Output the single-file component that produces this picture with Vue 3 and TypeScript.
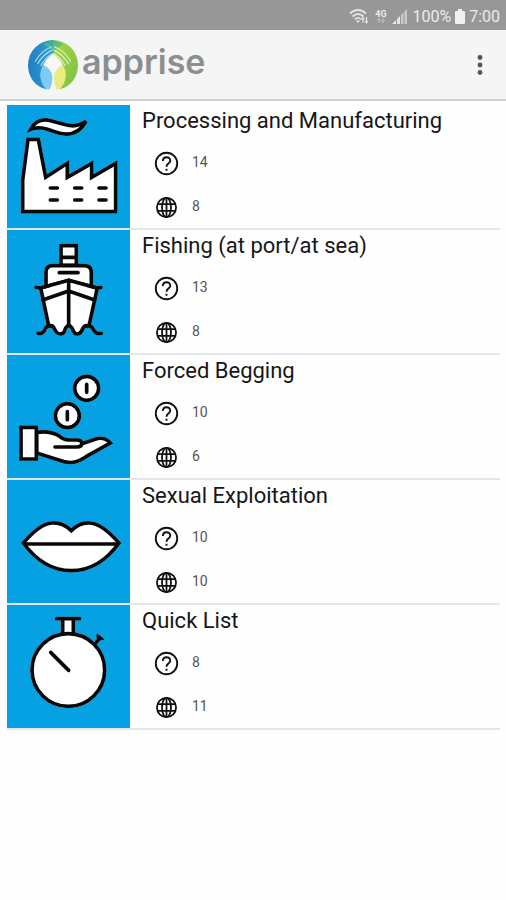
<script setup lang="ts">
type Art = 'factory' | 'ship' | 'hand' | 'lips' | 'watch'

interface Category {
  title: string
  art: Art
  viewBox: string
  questions: number
  languages: number
}

const categories: Category[] = [
  { title: 'Processing and Manufacturing', art: 'factory', viewBox: '21 15 369 369', questions: 14, languages: 8 },
  { title: 'Fishing (at port/at sea)', art: 'ship', viewBox: '21 6 369 369', questions: 13, languages: 8 },
  { title: 'Forced Begging', art: 'hand', viewBox: '21 9 369 369', questions: 10, languages: 6 },
  { title: 'Sexual Exploitation', art: 'lips', viewBox: '21 7 369 369', questions: 10, languages: 10 },
  { title: 'Quick List', art: 'watch', viewBox: '21 15 369 369', questions: 8, languages: 11 },
]
</script>

<template>
  <div class="screen">
    <div class="status">
      <svg class="wifi" viewBox="0 0 20 16" aria-hidden="true">
        <g fill="none" stroke="#e6e6e6" stroke-width="1.8">
          <path d="M1 5.500Q9 -1.500 17 5.500" />
          <path d="M3.500 8.500Q9 3.500 14.500 8.500" />
          <path d="M6 11.300Q9 8.500 12 11.300" />
        </g>
        <path d="M7 12.500h4l-2 2.500z" fill="#e6e6e6" />
        <path d="M14 15v-5M12.500 11.500L14 9.500l1.500 2M17.500 9v5.500M16 13l1.500 2 1.500-2" fill="none" stroke="#e6e6e6" stroke-width="1.100" />
      </svg>
      <span class="net">
        <span>4G</span>
        <svg viewBox="0 0 10 5" aria-hidden="true"><path d="M3 5V1M1.500 2.500L3 .5l1.500 2M7 0v4M5.500 2.500L7 4.500l1.500-2" fill="none" stroke="#c4c4c4" /></svg>
      </span>
      <svg class="signal" viewBox="0 0 16 15" aria-hidden="true">
        <path d="M0 15L4 11v4zM5 10l3-3v8H5z" fill="#e6e6e6" />
        <path d="M9 6l2.500-2.500V15H9zM12.500 2.500L15 0v15h-2.500z" fill="#c9c9c9" />
      </svg>
      <span>100%</span>
      <svg class="battery" viewBox="0 0 10 15" aria-hidden="true">
        <path d="M3 0h4v2h2q1 0 1 1v11q0 1-1 1H1q-1 0-1-1V3q0-1 1-1h2z" fill="#f1f1f1" />
      </svg>
      <span>7:00</span>
    </div>

    <header class="bar">
      <div class="brand">
        <svg class="logo" viewBox="8 10 148 148" aria-hidden="true">
          <defs>
            <linearGradient id="blue" x1="0" y1="0" x2="1" y2="0">
              <stop offset="0" stop-color="#1f7fc2" />
              <stop offset="1" stop-color="#2f9fce" />
            </linearGradient>
            <linearGradient id="green" x1="0" y1="0" x2="1" y2="1">
              <stop offset="0" stop-color="#a9d548" />
              <stop offset="1" stop-color="#7ac143" />
            </linearGradient>
          </defs>
          <path d="M82 10A74 74 0 0 0 8 84C8 118 28 148 62 156Q48 128 50 92Q58 66 82 50z" fill="url(#blue)" />
          <path d="M82 10A74 74 0 0 1 156 84C156 118 136 148 102 156Q116 128 114 92Q106 66 82 50z" fill="url(#green)" />
          <path d="M82 10Q62 14 52 24Q72 30 82 52Q92 30 112 24Q100 14 82 10z" fill="#45b08f" opacity=".75" />
          <path d="M55 84Q44 94 44 116Q47 142 62 156L72 156Q82 134 80 114Q74 94 55 84z" fill="#80cbf3" />
          <path d="M109 84Q120 94 120 116Q117 142 102 156L93 156Q83 134 85 114Q91 94 109 84z" fill="#e8ec82" />
          <g fill="none" stroke-width="3.500" stroke-linecap="round">
            <g stroke="#a8dbea">
              <path d="M78 30Q46 43 30 73" />
              <path d="M79 40Q52 53 37 80" />
              <path d="M80 50Q58 63 46 86" />
            </g>
            <g stroke="#dff0b4">
              <path d="M86 30Q118 43 134 73" />
              <path d="M85 40Q112 53 127 80" />
              <path d="M84 50Q106 63 118 86" />
            </g>
          </g>
          <path d="M62 23Q76 28 82 38Q88 28 102 23" fill="none" stroke="#b9e4d6" stroke-width="2" opacity=".5" />
          <path d="M82 56Q68 68 60 84Q76 94 80 114L82.500 124L85 114Q88 94 104 84Q96 68 82 56z" fill="#f8f8f8" />
        </svg>
        <span class="name">apprise</span>
      </div>
      <button class="more" type="button" aria-label="More options">
        <svg viewBox="0 0 6 22" aria-hidden="true">
          <circle cx="3" cy="3.500" r="2.400" /><circle cx="3" cy="11" r="2.400" /><circle cx="3" cy="18.500" r="2.400" />
        </svg>
      </button>
    </header>

    <main>
      <ul class="list">
        <li v-for="item in categories" :key="item.title" class="row">
          <svg class="tile" :viewBox="item.viewBox" aria-hidden="true">
            <g class="art">
              <template v-if="item.art === 'factory'">
                <path d="M68 335V240L84 118H115L137 232L202 190V232L275 190V232L347 190V335z" />
                <path d="M92 88C106 62 128 56 152 62C190 72 222 90 258 64C240 96 216 108 180 100C146 90 122 76 92 88z" />
                <path d="M151 264h21M224 264h21M297 264h21M151 300h21M224 300h21M297 300h21" />
              </template>
              <template v-else-if="item.art === 'ship'">
                <path d="M183 53H229V112H183zM183 88H229" />
                <path d="M138 176V132Q138 113 158 113H252Q274 113 274 132V176z" />
                <path d="M122 180L146 294Q158 290 163 302Q170 318 181 318Q193 318 196 302Q206 284 217 302Q222 318 231 318Q243 318 248 302Q254 290 267 294L292 180L206 157z" />
                <path d="M108 178L122 180L206 157L292 180L303 178M128 216L206 189L284 216M206 157V292" />
                <path class="line" d="M114 316Q129 320 136 302Q142 290 150 295M304 316Q287 320 279 302Q271 290 263 295" />
                <path d="M178 134H234" />
              </template>
              <template v-else-if="item.art === 'hand'">
                <circle cx="260" cy="109" r="36" />
                <circle cx="202" cy="191" r="36" />
                <path d="M260 97v24M202 179v24" />
                <path d="M110 241C148 236 164 244 176 251C188 262 194 264 207 264H231Q245 264 246 275L285 262Q312 252 331 273L258 314C224 337 202 334 176 324L110 303z" />
                <path class="line" d="M165 285H231Q245 285 246 273" />
                <path d="M63 226H109V321H63z" />
              </template>
              <template v-else-if="item.art === 'lips'">
                <path d="M70 196Q120 138 155 136Q187 133 214 159Q240 133 270 136Q306 138 357 196Q297 279 214 279Q131 279 70 196z" />
                <path d="M74 199H353" />
              </template>
              <template v-else>
                <path d="M188 56H220V104H188zM170 56H239" />
                <path class="line" d="M286 130L300 114" />
                <path class="knob" d="M292 102L312 118L298 120L291 113z" />
                <circle cx="205" cy="210" r="109" />
                <path d="M152 157L206 211" />
              </template>
            </g>
          </svg>
          <div class="body">
            <h2>{{ item.title }}</h2>
            <p class="stat">
              <svg viewBox="0 0 24 24" role="img" aria-label="Questions">
                <circle cx="12" cy="12" r="10.300" />
                <path d="M8.500 9.500C8.500 4.800 15.600 4.800 15.600 9.300C15.600 12 12 12.200 12 15M12 17v2" />
              </svg>
              <span>{{ item.questions }}</span>
            </p>
            <p class="stat">
              <svg class="globe" viewBox="0 0 24 24" role="img" aria-label="Languages">
                <circle cx="12" cy="12" r="9.200" />
                <ellipse cx="12" cy="12" rx="4.300" ry="9.200" />
                <path d="M12 2.800v18.400M3.500 8.800h17M3.500 15.200h17" />
              </svg>
              <span>{{ item.languages }}</span>
            </p>
          </div>
        </li>
      </ul>
    </main>
  </div>
</template>

<style>
body {
  background: #fefefe;
}
</style>

<style scoped>
.screen {
  min-height: 100vh;
  font-family: Roboto, "Liberation Sans", sans-serif;
  color: #161616;
}

.status {
  display: flex;
  align-items: center;
  justify-content: flex-end;
  gap: 4px;
  height: 30px;
  padding: 2px 6px 0 0;
  box-sizing: border-box;
  background: #979797;
  color: #ececec;
  font-size: 16px;
}

.wifi {
  width: 20px;
  height: 16px;
}

.net {
  display: flex;
  flex-direction: column;
  align-items: center;
  width: 15px;
  font-size: 9px;
  font-weight: 700;
  line-height: 8px;
}

.net svg {
  width: 10px;
  height: 5px;
}

.signal {
  width: 16px;
  height: 15px;
}

.battery {
  width: 10px;
  height: 15px;
}

.bar {
  display: flex;
  align-items: center;
  justify-content: space-between;
  height: 69px;
  padding: 0 14px 0 28px;
  background: #f5f5f5;
  border-bottom: 2px solid #d0d0d0;
}

.brand {
  display: flex;
  align-items: center;
  gap: 4px;
}

.logo {
  width: 50px;
  height: 50px;
}

.name {
  padding-bottom: 6px;
  font-family: Inter, "Open Sans", sans-serif;
  font-size: 34px;
  font-weight: 600;
  line-height: 40px;
  color: #8c8f91;
}

.more {
  display: flex;
  justify-content: center;
  width: 24px;
  padding: 0;
  border: 0;
  background: none;
}

.more svg {
  width: 6px;
  height: 22px;
  fill: #555;
}

.list {
  margin: 0;
  padding: 4px 6px 0 7px;
  list-style: none;
}

.row {
  display: flex;
  border-bottom: 2px solid #e3e6ec;
}

.tile {
  flex: none;
  width: 123px;
  height: 123px;
  background: #06a1e3;
}

.art {
  fill: #fff;
  stroke: #080808;
  stroke-width: 11;
  stroke-linecap: round;
  filter: drop-shadow(0 0 2px rgba(255, 255, 255, 0.7));
}

.art .line {
  fill: none;
}

.art .knob {
  fill: #080808;
  stroke-width: 3;
}

.body {
  padding-left: 12px;
}

h2 {
  margin: 0 0 10px;
  font-size: 22px;
  font-weight: 400;
  line-height: 32px;
}

.stat {
  display: flex;
  align-items: center;
  gap: 13px;
  height: 32px;
  margin: 0 0 12px 12px;
  font-size: 14px;
  color: #555;
}

.stat:last-child {
  margin-bottom: 0;
}

.stat svg {
  width: 25px;
  height: 25px;
  fill: none;
  stroke: #111;
  stroke-width: 1.8;
}

.stat .globe {
  stroke-width: 1.7;
}

.stat span {
  padding-bottom: 2px;
}
</style>
